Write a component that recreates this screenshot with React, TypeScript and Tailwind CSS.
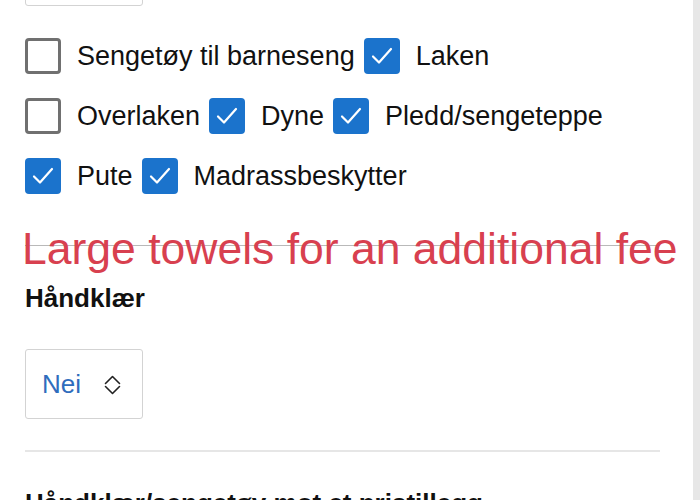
import React from "react";

type Item = { label: string; checked: boolean };

const rows: Item[][] = [
  [
    { label: "Sengetøy til barneseng", checked: false },
    { label: "Laken", checked: true },
  ],
  [
    { label: "Overlaken", checked: false },
    { label: "Dyne", checked: true },
    { label: "Pledd/sengeteppe", checked: true },
  ],
  [
    { label: "Pute", checked: true },
    { label: "Madrassbeskytter", checked: true },
  ],
];

const Checkbox = ({ checked }: { checked: boolean }) =>
  checked ? (
    <div className="w-[36px] h-[36px] rounded-[4px] bg-[#1b73cc] flex items-center justify-center shrink-0">
      <svg width="36" height="36" viewBox="0 0 36 36" fill="none">
        <polyline points="9,18.5 15,24.5 27,11" stroke="#fff" strokeWidth="2.2" strokeLinecap="round" strokeLinejoin="round" />
      </svg>
    </div>
  ) : (
    <div className="w-[36px] h-[36px] rounded-[4px] border-[3px] border-[#707070] bg-white shrink-0" />
  );

const UpDown = () => (
  <svg width="17" height="20" viewBox="0 0 17 20" fill="none">
    <polyline points="1.5,8.5 8.5,1.5 15.5,8.5" stroke="#222" strokeWidth="1.6" strokeLinejoin="round" strokeLinecap="round" />
    <polyline points="1.5,11.5 8.5,18.5 15.5,11.5" stroke="#222" strokeWidth="1.6" strokeLinejoin="round" strokeLinecap="round" />
  </svg>
);

const Select = ({ value, className }: { value?: string; className?: string }) => (
  <div className={`w-[118px] h-[70px] shrink-0 border-[1.5px] border-[#d3d3d3] rounded-[3px] bg-white flex items-center pl-[16px] ${className ?? ""}`}>
    {value && (
      <>
        <span className="text-[26px] text-[#2f6dbd] leading-none">{value}</span>
        <span className="ml-[23px] mt-[1px] flex">
          <UpDown />
        </span>
      </>
    )}
  </div>
);

export default function App() {
  return (
    <div className="w-[700px] h-[500px] overflow-hidden bg-white flex font-['Liberation_Sans',Arial,sans-serif]">
      <div className="flex-1 pl-[25px] pr-[33px] flex flex-col">
        {/* select scrolled off the top */}
        <Select className="-mt-[64px]" />

        <div className="mt-[32px] flex flex-col gap-[24px] shrink-0">
          {rows.map((row, i) => (
            <div key={i} className="flex items-center gap-[9px]">
              {row.map((item) => (
                <div key={item.label} className="flex items-center">
                  <Checkbox checked={item.checked} />
                  <span className="ml-[16px] text-[27px] leading-none text-[#111] whitespace-nowrap">{item.label}</span>
                </div>
              ))}
            </div>
          ))}
        </div>

        <div className="relative mt-[51px] h-px shrink-0 bg-[#b9b9b9]">
          <span className="absolute -left-[3px] -top-[18px] text-[44.5px] leading-none text-[#d8404f] whitespace-nowrap">
            Large towels for an additional fee
          </span>
        </div>

        <h3 className="mt-[39px] shrink-0 text-[26px] font-bold leading-none text-[#111]">Håndklær</h3>

        <Select value="Nei" className="mt-[38px]" />

        <div className="mt-[31px] h-[2px] shrink-0 bg-[#e6e6e6]" />

        <h3 className="mt-[38px] shrink-0 text-[26px] font-bold leading-none text-[#111] whitespace-nowrap">
          Håndklær/sengetøy mot et pristillegg
        </h3>
      </div>
      <div className="w-[7px] bg-[#e7e7e7]" />
    </div>
  );
}
